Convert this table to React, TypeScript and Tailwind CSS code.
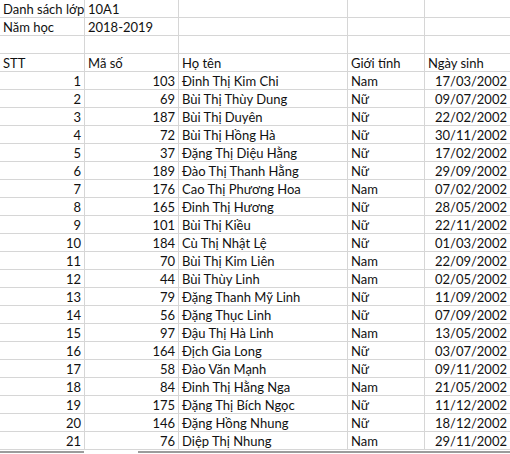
import React from "react"

type Row = [number, number, string, string, string]

const students: Row[] = [
  [1, 103, "Đinh Thị Kim Chi", "Nam", "17/03/2002"],
  [2, 69, "Bùi Thị Thùy Dung", "Nữ", "09/07/2002"],
  [3, 187, "Bùi Thị Duyên", "Nữ", "22/02/2002"],
  [4, 72, "Bùi Thị Hồng Hà", "Nữ", "30/11/2002"],
  [5, 37, "Đặng Thị Diệu Hằng", "Nữ", "17/02/2002"],
  [6, 189, "Đào Thị Thanh Hằng", "Nữ", "29/09/2002"],
  [7, 176, "Cao Thị Phương Hoa", "Nam", "07/02/2002"],
  [8, 165, "Đinh Thị Hương", "Nữ", "28/05/2002"],
  [9, 101, "Bùi Thị Kiều", "Nữ", "22/11/2002"],
  [10, 184, "Cù Thị Nhật Lệ", "Nữ", "01/03/2002"],
  [11, 70, "Bùi Thị Kim Liên", "Nam", "22/09/2002"],
  [12, 44, "Bùi Thùy Linh", "Nam", "02/05/2002"],
  [13, 79, "Đặng Thanh Mỹ Linh", "Nữ", "11/09/2002"],
  [14, 56, "Đặng Thục Linh", "Nữ", "07/09/2002"],
  [15, 97, "Đậu Thị Hà Linh", "Nam", "13/05/2002"],
  [16, 164, "Địch Gia Long", "Nữ", "03/07/2002"],
  [17, 58, "Đào Văn Mạnh", "Nữ", "09/11/2002"],
  [18, 84, "Đinh Thị Hằng Nga", "Nam", "21/05/2002"],
  [19, 175, "Đặng Thị Bích Ngọc", "Nữ", "11/12/2002"],
  [20, 146, "Đặng Hồng Nhung", "Nữ", "18/12/2002"],
  [21, 76, "Diệp Thị Nhung", "Nam", "29/11/2002"],
]

// plain text cell, left aligned; right-aligned for numbers and dates
function Cell({ children, right, last }: { children?: React.ReactNode; right?: boolean; last?: boolean }) {
  return (
    <div
      className={`h-[18px] border-b border-[#d6d6d6] ${last ? "" : "border-r"} px-[3px] pt-[1px] leading-[17px] whitespace-nowrap overflow-visible ${
        right ? "text-right" : "text-left"
      }`}
    >
      {children}
    </div>
  )
}

export default function App() {
  return (
    <div className="w-[510px] h-[454px] bg-white overflow-hidden text-[13px] text-[#111]" style={{ fontFamily: "Lato, 'Open Sans', sans-serif" }}>
      <div className="grid grid-cols-[85px_94px_169px_77px_85px]">
        {/* sheet info */}
        <Cell>Danh sách lớp</Cell>
        <Cell>10A1</Cell>
        <Cell />
        <Cell />
        <Cell last />

        <Cell>Năm học</Cell>
        <Cell>2018-2019</Cell>
        <Cell />
        <Cell />
        <Cell last />

        <Cell />
        <Cell />
        <Cell />
        <Cell />
        <Cell last />

        {/* header */}
        <Cell>STT</Cell>
        <Cell>Mã số</Cell>
        <Cell>Họ tên</Cell>
        <Cell>Giới tính</Cell>
        <Cell last>Ngày sinh</Cell>

        {students.map(([stt, ma, ten, gt, ns]) => (
          <React.Fragment key={stt}>
            <Cell right>{stt}</Cell>
            <Cell right>{ma}</Cell>
            <Cell>{ten}</Cell>
            <Cell>{gt}</Cell>
            <Cell right last>{ns}</Cell>
          </React.Fragment>
        ))}
      </div>

      {/* bottom frame edge */}
      <div className="flex h-[2px] mt-[1px]">
        <div className="w-[84px] bg-[#9c9c9c]" />
        <div className="w-[54px] bg-white" />
        <div className="flex-1 bg-[#9c9c9c]" />
      </div>
    </div>
  )
}
